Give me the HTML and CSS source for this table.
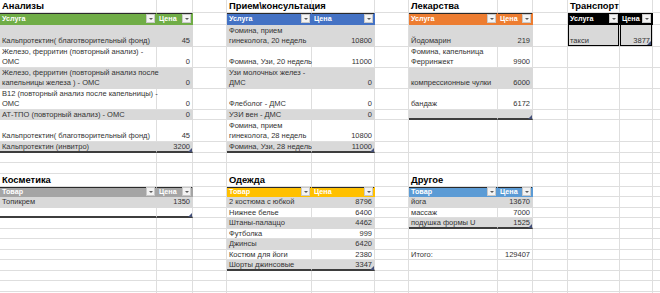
FILE: index.html
```html
<!DOCTYPE html>
<html lang="ru">
<head>
<meta charset="utf-8">
<title>Расходы</title>
<link rel="stylesheet" href="styles.css">
</head>
<body>
<table class="sheet">
<colgroup>
<col class="ca"><col class="cb"><col class="cc"><col class="cd"><col class="ce"><col class="cf"><col class="cg"><col class="ch"><col class="ci"><col class="cj"><col class="ck"><col class="cl">
</colgroup>
<tbody>
<tr class="h13">
<td class="ttl">Анализы</td><td></td><td></td>
<td class="ttl">Прием\консультация</td><td></td><td></td>
<td class="ttl">Лекарства</td><td></td><td></td>
<td class="ttl">Транспорт</td><td></td><td></td>
</tr>
<tr class="h12">
<td class="hd green top"><div class="hc">Услуга<span class="fb"></span></div></td><td class="hd green top"><div class="hc">Цена<span class="fb"></span></div></td><td></td>
<td class="hd blue top"><div class="hc">Услуга<span class="fb"></span></div></td><td class="hd blue top"><div class="hc">Цена<span class="fb"></span></div></td><td></td>
<td class="hd orange top"><div class="hc">Услуга<span class="fb"></span></div></td><td class="hd orange top"><div class="hc">Цена<span class="fb"></span></div></td><td></td>
<td class="hd black tb"><div class="hc">Услуга<span class="fb"></span></div></td><td class="hd black tb"><div class="hc">Цена<span class="fb"></span></div></td><td></td>
</tr>
<tr class="h22">
<td class="g">Кальпротектин( благотворительный фонд)</td><td class="g n">45</td><td></td>
<td class="g">Фомина, прием<br>гинеколога, 20 недель</td><td class="g n">10800</td><td></td>
<td class="g">Йодомарин</td><td class="g n">219</td><td></td>
<td class="g tb">такси</td><td class="g n tb end-cell"><span class="grip"></span>3877</td><td></td>
</tr>
<tr class="h21">
<td>Железо, ферритин (повторный анализ) -<br>ОМС</td><td class="n">0</td><td></td>
<td>Фомина, Узи, 20 недель</td><td class="n">11000</td><td></td>
<td>Фомина, капельница<br>Ферринжект</td><td class="n">9900</td><td></td>
<td></td><td></td><td></td>
</tr>
<tr class="h20">
<td class="g">Железо, ферритин (повторный анализ после<br>капельницы железа ) - ОМС</td><td class="g n">0</td><td></td>
<td class="g">Узи молочных желез -<br>ДМС</td><td class="g n">0</td><td></td>
<td class="g">компрессионные чулки</td><td class="g n">6000</td><td></td>
<td></td><td></td><td></td>
</tr>
<tr class="h21">
<td>B12 (повторный анализ после капельницы) -<br>ОМС</td><td class="n">0</td><td></td>
<td>Флеболог - ДМС</td><td class="n">0</td><td></td>
<td>бандаж</td><td class="n">6172</td><td></td>
<td></td><td></td><td></td>
</tr>
<tr class="h10">
<td class="g">АТ-ТПО (повторный анализ) - ОМС</td><td class="g n">0</td><td></td>
<td class="g">УЗИ вен - ДМС</td><td class="g n">0</td><td></td>
<td class="g end"></td><td class="g n end end-cell"><span class="grip"></span></td><td></td>
<td></td><td></td><td></td>
</tr>
<tr class="h22">
<td>Кальпротектин( благотворительный фонд)</td><td class="n">45</td><td></td>
<td>Фомина, прием<br>гинеколога, 28 недель</td><td class="n">10800</td><td></td>
<td></td><td></td><td></td>
<td></td><td></td><td></td>
</tr>
<tr class="h11">
<td class="g end">Кальпротектин (инвитро)</td><td class="g n end end-cell"><span class="grip"></span>3200</td><td></td>
<td class="g end">Фомина, Узи, 28 недель</td><td class="g n end end-cell"><span class="grip"></span>11000</td><td></td>
<td></td><td></td><td></td>
<td></td><td></td><td></td>
</tr>
<tr class="h10"><td></td><td></td><td></td><td></td><td></td><td></td><td></td><td></td><td></td><td></td><td></td><td></td></tr>
<tr class="h11"><td></td><td></td><td></td><td></td><td></td><td></td><td></td><td></td><td></td><td></td><td></td><td></td></tr>
<tr class="h13">
<td class="ttl">Косметика</td><td></td><td></td>
<td class="ttl">Одежда</td><td></td><td></td>
<td class="ttl">Другое</td><td></td><td></td>
<td></td><td></td><td></td>
</tr>
<tr class="h10">
<td class="hd gray top"><div class="hc">Товар<span class="fb"></span></div></td><td class="hd gray top"><div class="hc">Цена<span class="fb"></span></div></td><td></td>
<td class="hd gold top"><div class="hc">Товар<span class="fb"></span></div></td><td class="hd gold top"><div class="hc">Цена<span class="fb"></span></div></td><td></td>
<td class="hd sky top"><div class="hc">Товар<span class="fb"></span></div></td><td class="hd sky top"><div class="hc">Цена<span class="fb"></span></div></td><td></td>
<td></td><td></td><td></td>
</tr>
<tr class="h11">
<td class="g">Топикрем</td><td class="g n">1350</td><td></td>
<td class="g">2 костюма с юбкой</td><td class="g n">8796</td><td></td>
<td class="g">йога</td><td class="g n">13670</td><td></td>
<td></td><td></td><td></td>
</tr>
<tr class="h10">
<td class="end"></td><td class="n end end-cell"><span class="grip"></span></td><td></td>
<td>Нижнее белье</td><td class="n">6400</td><td></td>
<td>массаж</td><td class="n">7000</td><td></td>
<td></td><td></td><td></td>
</tr>
<tr class="h11">
<td></td><td></td><td></td>
<td class="g">Штаны-палаццо</td><td class="g n">4462</td><td></td>
<td class="g end">подушка формы U</td><td class="g n end end-cell"><span class="grip"></span>1525</td><td></td>
<td></td><td></td><td></td>
</tr>
<tr class="h10">
<td></td><td></td><td></td>
<td>Футболка</td><td class="n">999</td><td></td>
<td></td><td></td><td></td>
<td></td><td></td><td></td>
</tr>
<tr class="h11">
<td></td><td></td><td></td>
<td class="g">Джинсы</td><td class="g n">6420</td><td></td>
<td></td><td></td><td></td>
<td></td><td></td><td></td>
</tr>
<tr class="h10">
<td></td><td></td><td></td>
<td>Костюм для йоги</td><td class="n">2380</td><td></td>
<td>Итого:</td><td class="n">129407</td><td></td>
<td></td><td></td><td></td>
</tr>
<tr class="h11">
<td></td><td></td><td></td>
<td class="g end">Шорты джинсовые</td><td class="g n end end-cell"><span class="grip"></span>3347</td><td></td>
<td></td><td></td><td></td>
<td></td><td></td><td></td>
</tr>
<tr class="h10"><td></td><td></td><td></td><td></td><td></td><td></td><td></td><td></td><td></td><td></td><td></td><td></td></tr>
<tr class="h11"><td></td><td></td><td></td><td></td><td></td><td></td><td></td><td></td><td></td><td></td><td></td><td></td></tr>
<tr class="h11"><td></td><td></td><td></td><td></td><td></td><td></td><td></td><td></td><td></td><td></td><td></td><td></td></tr>
</tbody>
</table>
</body>
</html>
```
FILE: styles.css
```css
html, body {
  margin: 0;
  padding: 0;
  background: #fff;
  overflow: hidden;
}
body {
  width: 660px;
  height: 293px;
}
.sheet {
  table-layout: fixed;
  border-collapse: separate;
  border-spacing: 0;
  width: 690px;
  font-family: "Liberation Sans", Arial, sans-serif;
  font-size: 7.5px;
  line-height: 10px;
  color: #333;
}
.ca { width: 157px; }
.cb { width: 36px; }
.cc { width: 34px; }
.cd { width: 85px; }
.ce { width: 63px; }
.cf { width: 34px; }
.cg { width: 89px; }
.ch { width: 35px; }
.ci { width: 35px; }
.cj { width: 52px; }
.ck { width: 33px; }
.cl { width: 37px; }

.sheet td {
  box-sizing: border-box;
  padding: 0 2px;
  border-right: 1px solid #dedede;
  border-bottom: 1px solid #dedede;
  vertical-align: bottom;
  white-space: nowrap;
  overflow: visible;
}
.h10 > td { height: 10px; line-height: 9px; }
.h11 > td { height: 11px; line-height: 10px; }
.h12 > td { height: 12px; }
.h13 > td { height: 13px; }
.h20 > td { height: 20px; }
.h21 > td { height: 21px; }
.h22 > td { height: 22px; }

.ttl {
  font-size: 9.4px;
  font-weight: bold;
  color: #000;
  line-height: 12px;
}
.sheet td.g {
  background: #d9d9d9;
  border-color: #d9d9d9;
}
.n { text-align: right; }

.sheet td.hd {
  color: #fff;
  font-size: 7.2px;
  font-weight: bold;
  padding: 0 1px 0 2px;
  vertical-align: middle;
}
.hc {
  display: flex;
  align-items: center;
  justify-content: space-between;
  gap: 2px;
}
.fb {
  box-sizing: border-box;
  width: 9px;
  height: 9px;
  background: #f3f3f3;
  border: 1px solid #c9c9c9;
  display: flex;
  align-items: center;
  justify-content: center;
  flex: none;
}
.fb::before {
  content: "";
  border-left: 2px solid transparent;
  border-right: 2px solid transparent;
  border-top: 2px solid #5a5a5a;
}
.top { box-shadow: inset 0 1px 0 #2a2a2a; }
.sheet td.green { background: #70ad47; border-color: #70ad47; }
.sheet td.blue { background: #4472c4; border-color: #4472c4; }
.sheet td.orange { background: #ed7d31; border-color: #ed7d31; }
.sheet td.black { background: #000; border-color: #000; }
.sheet td.gray { background: #a5a5a5; border-color: #a5a5a5; }
.sheet td.gold { background: #ffc000; border-color: #ffc000; }
.sheet td.sky { background: #5b9bd5; border-color: #5b9bd5; }

.sheet td.end {
  border-bottom: 2px solid #3d3d3d;
  line-height: 8px;
}
.sheet td.tb {
  box-shadow: inset 1px 0 0 #000, inset -1px 0 0 #000, inset 0 -1px 0 #000;
}
.end-cell { position: relative; }
.grip {
  position: absolute;
  right: 0;
  bottom: -1px;
  width: 0;
  height: 0;
  border-left: 4px solid transparent;
  border-bottom: 4px solid #44507a;
}
.sheet td.tb .grip { right: 1px; bottom: 1px; }
```
